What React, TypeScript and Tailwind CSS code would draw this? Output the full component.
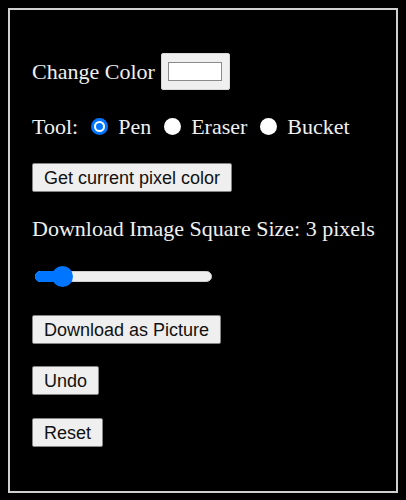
import React, { useState } from "react";

const serif = { fontFamily: '"Liberation Serif", "Times New Roman", serif' };

function Btn({ children }: { children: React.ReactNode }) {
  return (
    <button
      type="button"
      className="h-[29px] self-start rounded-[2px] border border-[#858585] bg-[#efefef] px-[11px] text-[18px] leading-none text-[#111]"
      style={{ fontFamily: '"Liberation Sans", Arial, sans-serif' }}
    >
      {children}
    </button>
  );
}

function Radio({ checked, label, onClick }: { checked: boolean; label: string; onClick: () => void }) {
  return (
    <label className="flex items-center gap-[10px] cursor-pointer" onClick={onClick}>
      {checked ? (
        <span className="flex h-[17px] w-[17px] items-center justify-center rounded-full bg-[#0075ff]">
          <span className="h-[11px] w-[11px] rounded-full border-[2px] border-white bg-[#0075ff]" />
        </span>
      ) : (
        <span className="h-[17px] w-[17px] rounded-full bg-white" />
      )}
      <span>{label}</span>
    </label>
  );
}

export default function App() {
  const [tool, setTool] = useState("Pen");
  return (
    <div className="min-h-screen bg-black p-2" style={serif}>
      <div className="flex h-[485px] flex-col whitespace-nowrap border-2 border-[#d0d0d0] bg-black px-[22px] pt-[43px] text-[22px] text-[#f0f0f0]">
        <div className="flex h-[37px] items-center gap-[6px]">
          <span>Change Color</span>
          <div className="flex h-[37px] w-[69px] items-center justify-center rounded-[2px] border border-[#d8d8d8] bg-[#efefef]">
            <div className="h-[19px] w-[54px] border border-[#8a8a8a] bg-white" />
          </div>
        </div>
        <div className="mt-[23px] flex h-[26px] items-center gap-[13px]">
          <span>Tool:</span>
          <Radio checked={tool === "Pen"} label="Pen" onClick={() => setTool("Pen")} />
          <Radio checked={tool === "Eraser"} label="Eraser" onClick={() => setTool("Eraser")} />
          <Radio checked={tool === "Bucket"} label="Bucket" onClick={() => setTool("Bucket")} />
        </div>
        <div className="mt-[24px] flex">
          <Btn>Get current pixel color</Btn>
        </div>
        <div className="mt-[23px] flex h-[26px] items-center">Download Image Square Size: 3 pixels</div>
        <div className="mt-[24px] flex h-[22px] items-center pl-[3px]">
          <div className="relative h-[11px] w-[177px] rounded-full border border-[#cfcfcf] bg-[#efefef]">
            <div className="absolute left-[-1px] top-[-1px] h-[11px] w-[30px] rounded-full bg-[#0075ff]" />
            <div className="absolute left-[16px] top-[-6px] h-[21px] w-[21px] rounded-full bg-[#0075ff]" />
          </div>
        </div>
        <div className="mt-[28px] flex">
          <Btn>Download as Picture</Btn>
        </div>
        <div className="mt-[22px] flex">
          <Btn>Undo</Btn>
        </div>
        <div className="mt-[23px] flex">
          <Btn>Reset</Btn>
        </div>
      </div>
    </div>
  );
}
